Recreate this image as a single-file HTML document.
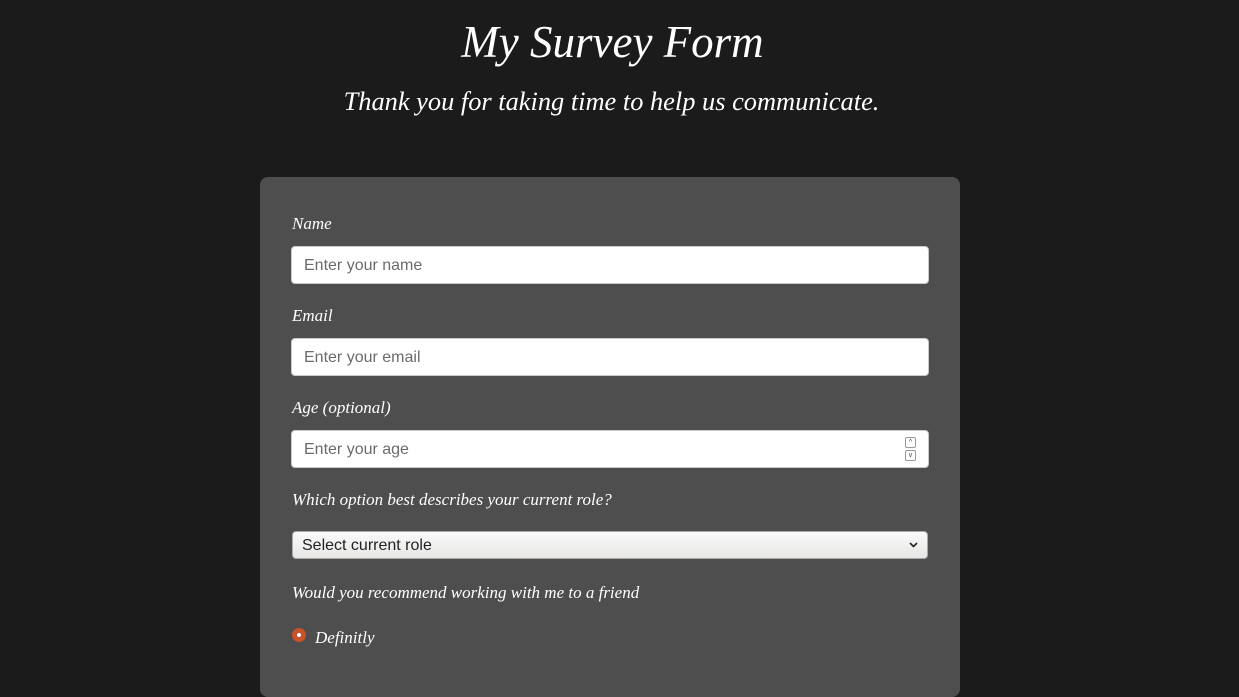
<!DOCTYPE html>
<html><head><style>
html,body{margin:0;padding:0;background:#1b1b1b;width:1239px;height:663px;overflow:hidden}
body{font-family:"Liberation Serif",serif;color:#fff}
h1{position:absolute;top:14px;left:0;width:1225px;text-align:center;margin:0;font-style:italic;font-weight:normal;font-size:45px;line-height:56px}
.sub{position:absolute;top:83px;left:0;width:1223px;text-align:center;font-style:italic;font-size:26.4px;line-height:36px}
.panel{position:absolute;left:260px;top:177px;width:700px;height:520px;background:#4e4e4e;border-radius:8px}
.lbl{position:absolute;left:32px;font-style:italic;font-size:17px;line-height:20px}
.inp{position:absolute;left:31px;width:636px;height:36px;background:#fff;border:1px solid #c9c9c9;border-radius:4px;font-family:"Liberation Sans",sans-serif;font-size:16px;color:#6b6b6b;line-height:38px;text-indent:12px}
.sel{position:absolute;left:32px;top:354px;width:634px;height:26px;border:1px solid #aaa;border-radius:4px;background:linear-gradient(#fbfbfb,#e7e6e5);font-family:"Liberation Sans",sans-serif;font-size:16px;color:#222;line-height:28px;text-indent:9px}
.spin{position:absolute;right:13px;top:6px;width:10px;height:24px}
.spin div{width:9px;height:9px;border:1px solid #999;border-radius:2px;margin-bottom:2px;font-size:7px;line-height:9px;text-align:center;text-indent:0;color:#444}
.radio{position:absolute;left:32px;top:451px;width:14px;height:14px;border-radius:50%;background:#c8532a;}
.radio:after{content:"";position:absolute;left:5px;top:5px;width:4px;height:4px;border-radius:50%;background:#fff}
</style></head><body>
<h1>My Survey Form</h1>
<div class="sub">Thank you for taking time to help us communicate.</div>
<div class="panel">
<div class="lbl" style="top:37px">Name</div>
<div class="inp" style="top:69px">Enter your name</div>
<div class="lbl" style="top:129px">Email</div>
<div class="inp" style="top:161px">Enter your email</div>
<div class="lbl" style="top:221px">Age (optional)</div>
<div class="inp" style="top:253px">Enter your age<div class="spin"><div>^</div><div>v</div></div></div>
<div class="lbl" style="top:313px">Which option best describes your current role?</div>
<div class="sel">Select current role<svg style="position:absolute;right:9px;top:10px" width="9" height="6" viewBox="0 0 9 6"><path d="M1 1l3.5 3.5L8 1" stroke="#222" stroke-width="1.6" fill="none"/></svg></div>
<div class="lbl" style="top:406px">Would you recommend working with me to a friend</div>
<div class="radio"></div>
<div class="lbl" style="top:451px;left:55px">Definitly</div>
</div>
</body></html>
